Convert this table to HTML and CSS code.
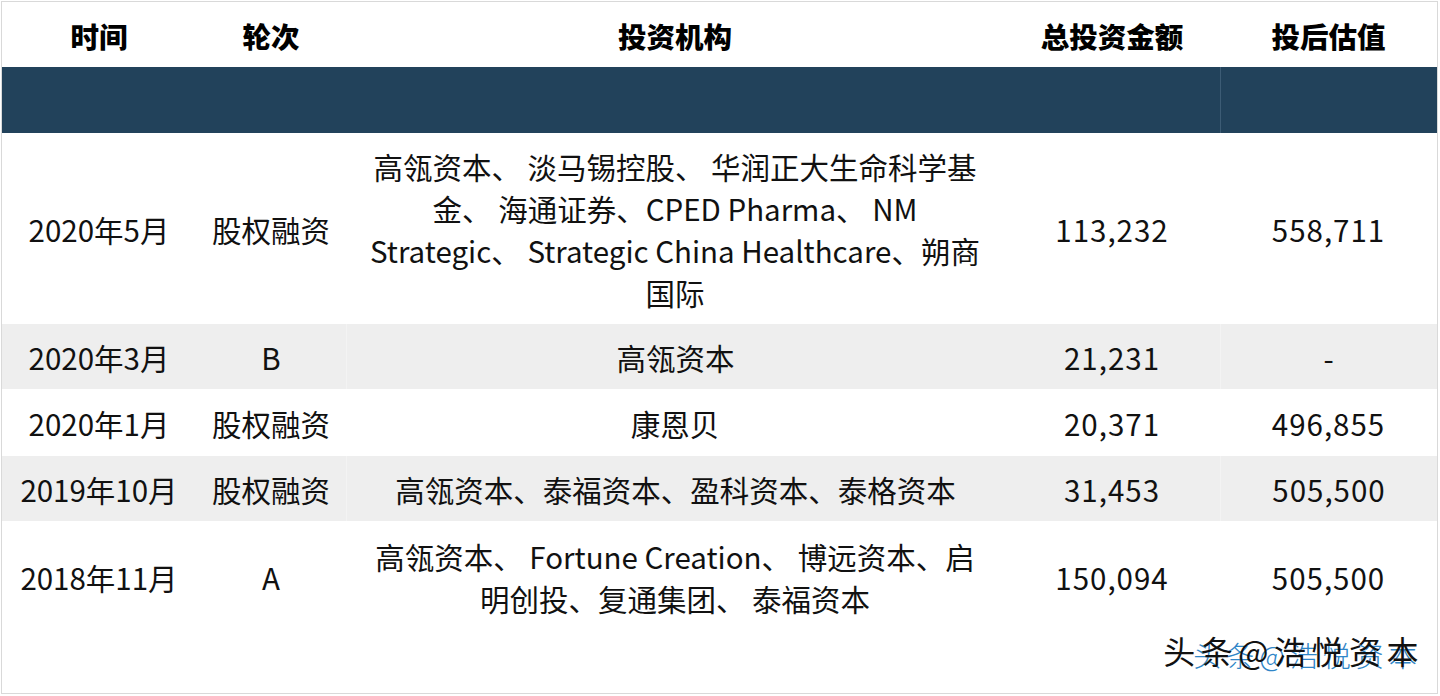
FILE: index.html
```html
<!DOCTYPE html>
<html lang="zh-CN">
<head>
<meta charset="utf-8">
<link rel="stylesheet" href="styles.css">
</head>
<body>
<div class="frame">
  <div class="grid">
    <div class="hd">时间</div>
    <div class="hd">轮次</div>
    <div class="hd">投资机构</div>
    <div class="hd">总投资金额</div>
    <div class="hd">投后估值</div>

    <div class="band band-wide"></div>
    <div class="band band-last"></div>

    <div class="c r1">2020年5月</div>
    <div class="c r1">股权融资</div>
    <div class="c r1 org">高瓴资本、 淡马锡控股、 华润正大生命科学基金、 海通证券、CPED Pharma、 NM Strategic、 Strategic China Healthcare、朔商国际</div>
    <div class="c r1 num">113,232</div>
    <div class="c r1 num">558,711</div>

    <div class="c alt">2020年3月</div>
    <div class="c alt">B</div>
    <div class="c alt div">高瓴资本</div>
    <div class="c alt num">21,231</div>
    <div class="c alt div num">-</div>

    <div class="c r3">2020年1月</div>
    <div class="c r3">股权融资</div>
    <div class="c r3">康恩贝</div>
    <div class="c r3 num">20,371</div>
    <div class="c r3 num">496,855</div>

    <div class="c alt">2019年10月</div>
    <div class="c alt">股权融资</div>
    <div class="c alt div">高瓴资本、泰福资本、盈科资本、泰格资本</div>
    <div class="c alt num">31,453</div>
    <div class="c alt div num">505,500</div>

    <div class="c r5">2018年11月</div>
    <div class="c r5">A</div>
    <div class="c r5 org org-narrow">高瓴资本、 Fortune Creation、 博远资本、启明创投、复通集团、 泰福资本</div>
    <div class="c r5 num">150,094</div>
    <div class="c r5 num">505,500</div>
  </div>
  <div class="footer">
    <div class="mark"><span class="mark-blue">头条@浩悦资本</span><span class="mark-black">头条@浩悦资本</span></div>
  </div>
</div>
</body>
</html>
```

FILE: styles.css
```css
html, body {
  margin: 0;
  padding: 0;
  background: #ffffff;
}

body {
  font-family: "Noto Sans CJK SC", "Noto Sans", sans-serif;
  color: #111111;
}

.frame {
  margin: 1px 0 0 1px;
  width: 1437px;
  height: 693px;
  border: 1px solid #d9d9d9;
  box-sizing: border-box;
  display: flex;
  flex-direction: column;
}

.grid {
  display: grid;
  grid-template-columns: 194px 150px 658px 216px 1fr;
  grid-template-rows: 65px 66px 191px 65px 67px 65px 112px;
}

.hd {
  display: flex;
  align-items: center;
  justify-content: center;
  font-size: 28.5px;
  font-weight: 900;
  color: #000000;
  padding-top: 2px;
}

.band {
  background: #22425b;
}

.band-wide {
  grid-column: 1 / 5;
}

.band-last {
  border-left: 1px solid #3d5c75;
}

.c {
  display: flex;
  align-items: center;
  justify-content: center;
  text-align: center;
  font-size: 29.5px;
  line-height: 42px;
}

.num {
  letter-spacing: 1px;
}

.org {
  padding: 0 14px;
}

.org-narrow {
  padding: 0 27px;
}

.alt {
  background: #eeeeee;
}

.alt.div {
  border-left: 1px solid #f3f3f3;
}

.footer {
  flex: 1;
  display: flex;
  justify-content: flex-end;
  align-items: flex-start;
  padding-right: 13px;
}

.mark {
  position: relative;
  font-size: 32px;
  letter-spacing: 5.5px;
  line-height: 40px;
  margin-top: -3px;
}

.mark-black {
  position: relative;
  z-index: 1;
  color: #111111;
}

.mark-blue {
  position: absolute;
  left: 30px;
  top: 5px;
  z-index: 0;
  font-size: 28px;
  font-weight: 300;
  letter-spacing: 5px;
  white-space: nowrap;
  color: #2f86c8;
}
```
